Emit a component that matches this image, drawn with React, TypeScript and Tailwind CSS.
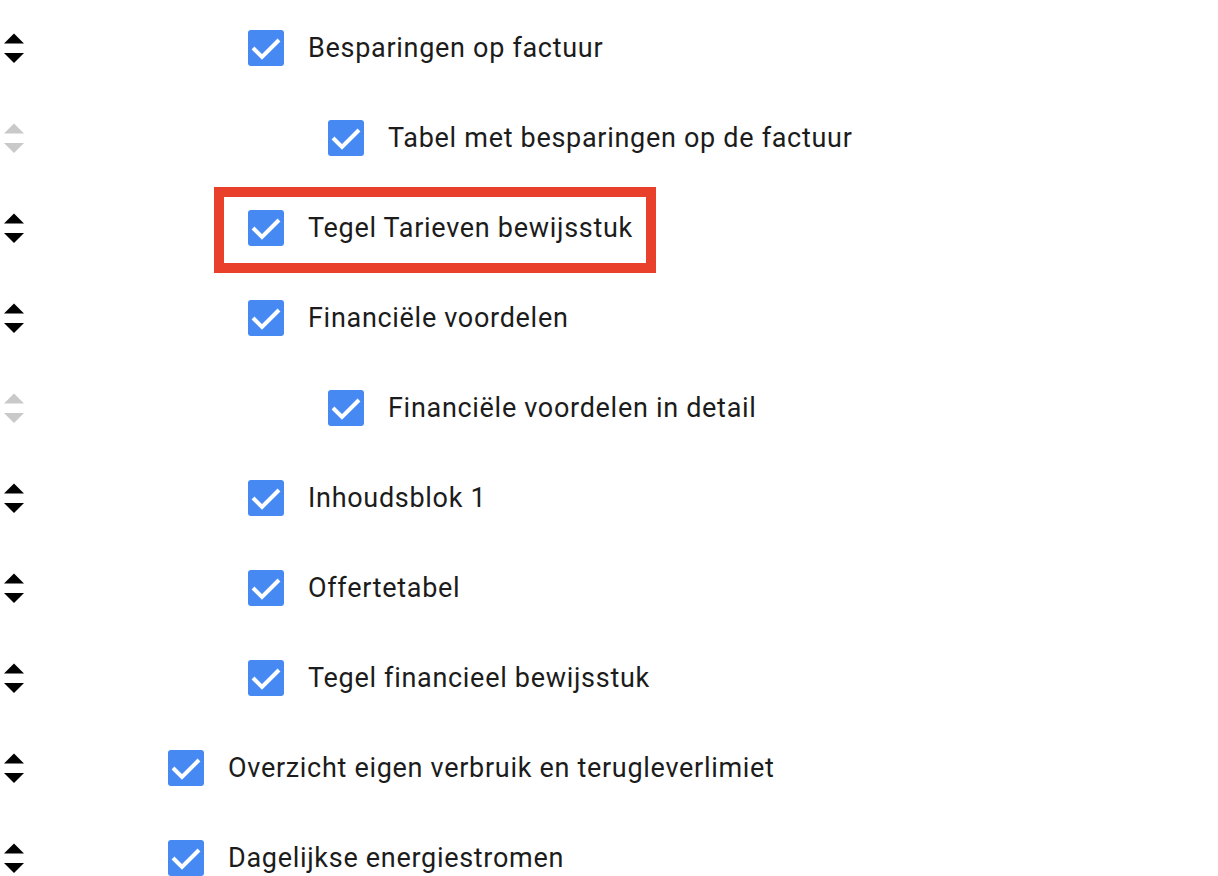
import React from "react";

type Item = { label: string; level: 0 | 1 | 2; movable: boolean; highlight?: boolean };

const items: Item[] = [
  { label: "Besparingen op factuur", level: 1, movable: true },
  { label: "Tabel met besparingen op de factuur", level: 2, movable: false },
  { label: "Tegel Tarieven bewijsstuk", level: 1, movable: true, highlight: true },
  { label: "Financiële voordelen", level: 1, movable: true },
  { label: "Financiële voordelen in detail", level: 2, movable: false },
  { label: "Inhoudsblok 1", level: 1, movable: true },
  { label: "Offertetabel", level: 1, movable: true },
  { label: "Tegel financieel bewijsstuk", level: 1, movable: true },
  { label: "Overzicht eigen verbruik en terugleverlimiet", level: 0, movable: true },
  { label: "Dagelijkse energiestromen", level: 0, movable: true },
];

// indent per nesting level (checkbox starts at 168 / 248 / 328)
const indent: Record<number, string> = {
  0: "ml-[144px]",
  1: "ml-[224px]",
  2: "ml-[304px]",
};

function SortHandle({ enabled }: { enabled: boolean }) {
  const fill = enabled ? "#000000" : "#c9c9c9";
  return (
    <svg width="20" height="31" viewBox="0 0 20 31" className="shrink-0">
      <polygon points="0,10.5 10,0.5 20,10.5" fill={fill} />
      <polygon points="0,20 20,20 10,30" fill={fill} />
    </svg>
  );
}

function Checkbox() {
  return (
    <div className="w-[36px] h-[36px] rounded-[3px] bg-[#4689f3] shrink-0 flex items-center justify-center">
      <svg width="36" height="36" viewBox="0 0 36 36">
        <polyline points="5,18 14,27 31,10" fill="none" stroke="#ffffff" strokeWidth="4" />
      </svg>
    </div>
  );
}

export default function App() {
  return (
    <div className="w-[1218px] h-[876px] overflow-hidden bg-white pt-[3px] font-['Roboto',sans-serif]">
      {items.map((item) => (
        <div key={item.label} className="relative h-[90px] flex items-center">
          <div className="ml-[4px]">
            <SortHandle enabled={item.movable} />
          </div>
          <div className={indent[item.level]}>
            <Checkbox />
          </div>
          <span className="ml-[24px] text-[27px] tracking-[0.7px] text-[#1c1c1c] leading-none whitespace-nowrap">
            {item.label}
          </span>
          {item.highlight && (
            <div className="absolute left-[214px] top-[4px] w-[442px] h-[86px] border-[10px] border-[#e8402a]" />
          )}
        </div>
      ))}
    </div>
  );
}
